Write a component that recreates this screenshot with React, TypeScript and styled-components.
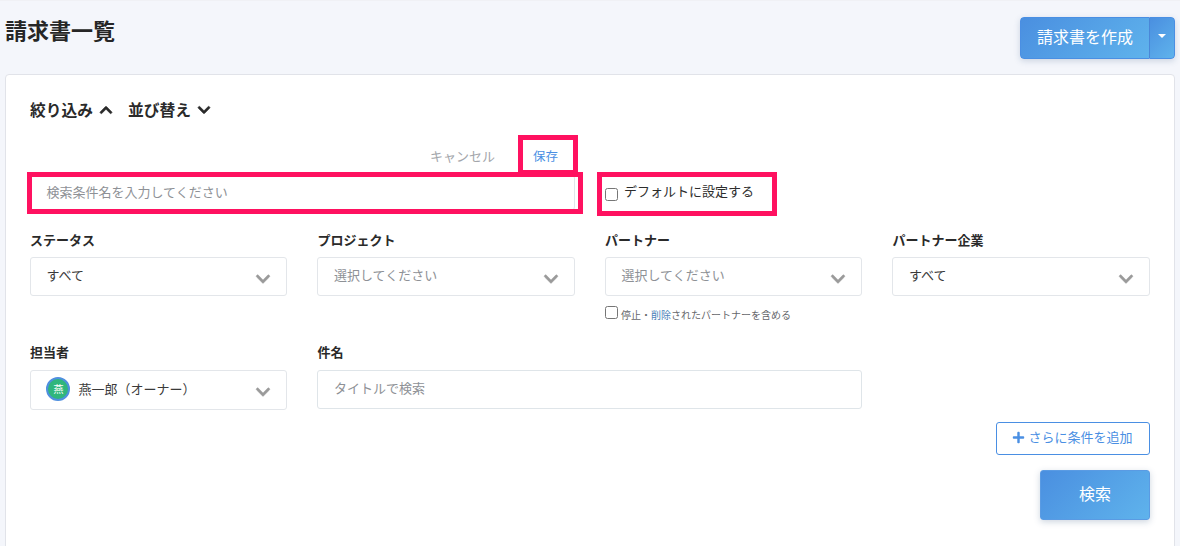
import React from 'react';
import styled, { createGlobalStyle } from 'styled-components';
import { FaChevronDown, FaChevronUp, FaPlus } from 'react-icons/fa';

const Global = createGlobalStyle`
  html, body { margin: 0; padding: 0; height: 546px; overflow: hidden; background: #f4f6fb; }
  body { font-family: "Noto Sans CJK JP", "Noto Sans", sans-serif; color: #222; }
  * { box-sizing: border-box; }
`;

const Page = styled.div`
  height: 546px;
  overflow: hidden;
  padding: 0 5px;
  border-top: 1px solid #f0f1f5;
`;

const Header = styled.header`
  display: flex;
  justify-content: space-between;
  align-items: flex-start;
  height: 73px;
`;

const Title = styled.h1`
  margin: 14px 0 0;
  font-size: 22px;
  line-height: 28px;
  font-weight: 700;
  color: #262626;
`;

const SplitButton = styled.div`
  display: flex;
  margin-top: 16px;
  height: 42px;
  border-radius: 4px;
  box-shadow: 0 2px 6px rgba(60, 90, 130, 0.22);
  overflow: hidden;
`;

const gradient = 'linear-gradient(135deg, #4a8fe0 0%, #5fb3ec 100%)';

const CreateButton = styled.button`
  width: 130px;
  border: 1px solid #4a8fe3;
  border-right: 1px solid #4a87d8;
  border-radius: 4px 0 0 4px;
  background: ${gradient};
  color: #fff;
  font: 400 16px/1 "Noto Sans CJK JP", sans-serif;
  padding: 0 0 5px;
`;

const CaretButton = styled.button`
  width: 25px;
  border: 1px solid #4a8fe3;
  border-left: none;
  border-radius: 0 4px 4px 0;
  background: ${gradient};
  display: flex;
  align-items: center;
  justify-content: center;
  padding: 0 0 4px;
  &::before {
    content: "";
    border-left: 4px solid transparent;
    border-right: 4px solid transparent;
    border-top: 4px solid #fff;
  }
`;

const Panel = styled.main`
  height: 480px;
  background: #fff;
  border: 1px solid #e1e3e9;
  border-radius: 4px;
  padding: 24px 24.1px 0 23.9px;
`;

const Toggles = styled.div`
  display: flex;
  gap: 15px;
  height: 24px;
  align-items: center;
`;

const Toggle = styled.button`
  display: flex;
  align-items: center;
  gap: 6px;
  border: none;
  background: none;
  padding: 0 0 2px;
  font: 700 15.75px/22px "Noto Sans CJK JP", sans-serif;
  color: #2a2a2a;
  svg {
    width: 14px;
    height: 14px;
    stroke: currentColor;
    stroke-width: 24;
  }
`;

const SaveRow = styled.div`
  display: flex;
  height: 38px;
  margin-top: 13px;
  padding-left: 400px;
  align-items: flex-start;
`;

const CancelLink = styled.span`
  font-size: 13px;
  line-height: 40px;
  color: #a3a6ab;
  width: 66px;
  white-space: nowrap;
`;

/* The pink frames are annotations drawn over the UI */
const Framed = styled.div<{ $t: number; $r: number; $b: number; $l: number }>`
  position: relative;
  &::after {
    content: "";
    position: absolute;
    top: ${p => p.$t}px;
    right: ${p => p.$r}px;
    bottom: ${p => p.$b}px;
    left: ${p => p.$l}px;
    border: 5px solid #ff1160;
    pointer-events: none;
  }
`;

const SaveLink = styled(Framed)`
  margin-left: 37px;
  font-size: 12.5px;
  line-height: 40px;
  color: #4a8fe3;
`;

const Grid = styled.div`
  display: grid;
  grid-template-columns: repeat(4, 1fr);
  column-gap: 30px;
`;

const NameRow = styled(Grid)`
  height: 58px;
`;

const NameField = styled(Framed)`
  grid-column: span 2;
  height: 37px;
`;

const NameInput = styled.div`
  height: 37px;
  border: 1px solid #e1e5ea;
  border-radius: 4px;
  padding: 0 15.6px;
  font-size: 13px;
  line-height: 33px;
  color: #8e9196;
`;

const DefaultField = styled(Framed)`
  display: flex;
  align-items: flex-start;
  width: 172px;
  font-size: 13px;
  line-height: 34px;
  color: #2d2d2d;
  white-space: nowrap;
`;

const Check = styled.span<{ $top: number }>`
  flex: none;
  width: 13px;
  height: 13px;
  margin-top: ${p => p.$top}px;
  border: 1px solid #767676;
  border-radius: 2.5px;
  background: #fff;
`;

const DefaultLabel = styled.span`
  margin-left: 6px;
`;

const FieldsGrid = styled(Grid)`
  grid-template-rows: 112px auto;
`;

const Field = styled.div<{ $span?: number }>`
  grid-column: span ${p => p.$span ?? 1};
`;

const Label = styled.div<{ $low?: boolean }>`
  font-size: 13px;
  font-weight: 700;
  line-height: 16px;
  height: ${p => (p.$low ? 26 : 25)}px;
  color: #2a2a2a;
`;

const Select = styled.div<{ $muted?: boolean; $tall?: boolean }>`
  display: flex;
  align-items: center;
  justify-content: space-between;
  height: ${p => (p.$tall ? 40 : 39)}px;
  padding: 0 15px ${p => (p.$tall ? 3 : 4)}px 15.6px;
  border: 1px solid #e3e6ea;
  border-radius: 3px;
  font-size: 13px;
  color: ${p => (p.$muted ? '#8e9196' : '#3a3a3a')};
  svg {
    font-size: 16px;
    color: #9a9a9a;
    margin-top: ${p => (p.$tall ? 7 : 8)}px;
    flex: none;
    stroke: currentColor;
    stroke-width: 16;
  }
`;

const Owner = styled.span`
  display: flex;
  align-items: center;
  gap: 8px;
`;

const Avatar = styled.span`
  width: 24px;
  height: 24px;
  border-radius: 50%;
  background: #2fb67c;
  border: 2px solid #4f8fdf;
  color: #fff;
  font-size: 10px;
  display: flex;
  align-items: center;
  justify-content: center;
`;

const TextInput = styled.div`
  height: 39px;
  border: 1px solid #dfe5e9;
  border-radius: 3px;
  padding: 0 15.6px;
  font-size: 13px;
  line-height: 33px;
  color: #8e9196;
`;

const Note = styled.div`
  display: flex;
  align-items: flex-start;
  margin-top: 9px;
  font-size: 10px;
  line-height: 20px;
  color: #66676b;
  white-space: nowrap;
`;

const NoteText = styled.span`
  margin-left: 3px;
`;

const NoteLink = styled.span`
  color: #4a7fb8;
`;

const Actions = styled.div`
  display: flex;
  flex-direction: column;
  align-items: flex-end;
  margin-top: 12px;
  gap: 15px;
`;

const AddButton = styled.button`
  display: flex;
  align-items: center;
  justify-content: center;
  gap: 3px;
  width: 154px;
  height: 33px;
  background: #fff;
  border: 1px solid #4a8fe3;
  border-radius: 3px;
  color: #4a8fe3;
  font: 400 13px/1 "Noto Sans CJK JP", sans-serif;
  padding: 0 1px 4px 0;
  svg { font-size: 13px; margin-top: 2px; }
`;

const SearchButton = styled.button`
  width: 110px;
  height: 50px;
  border: 1px solid #5a9be3;
  border-radius: 3px;
  background: ${gradient};
  color: #fff;
  font: 400 16px/1 "Noto Sans CJK JP", sans-serif;
  padding: 0 0 4px;
  box-shadow: 0 2px 6px rgba(60, 90, 130, 0.25);
`;

export default function App() {
  return (
    <Page>
      <Global />
      <Header>
        <Title>請求書一覧</Title>
        <SplitButton>
          <CreateButton>請求書を作成</CreateButton>
          <CaretButton aria-label="menu" />
        </SplitButton>
      </Header>
      <Panel>
        <Toggles>
          <Toggle>絞り込み <FaChevronUp /></Toggle>
          <Toggle>並び替え <FaChevronDown /></Toggle>
        </Toggles>
        <SaveRow>
          <CancelLink>キャンセル</CancelLink>
          <SaveLink $t={-1} $r={-20} $b={1} $l={-15}>保存</SaveLink>
        </SaveRow>
        <NameRow>
          <NameField $t={-2} $r={-8} $b={-3} $l={-3}>
            <NameInput>検索条件名を入力してください</NameInput>
          </NameField>
          <DefaultField $t={-2} $r={0} $b={16} $l={-8}>
            <Check $top={14} />
            <DefaultLabel>デフォルトに設定する</DefaultLabel>
          </DefaultField>
        </NameRow>
        <FieldsGrid>
          <Field>
            <Label>ステータス</Label>
            <Select>すべて<FaChevronDown /></Select>
          </Field>
          <Field>
            <Label>プロジェクト</Label>
            <Select $muted>選択してください<FaChevronDown /></Select>
          </Field>
          <Field>
            <Label>パートナー</Label>
            <Select $muted>選択してください<FaChevronDown /></Select>
            <Note>
              <Check $top={1} />
              <NoteText>停止・<NoteLink>削除</NoteLink>されたパートナーを含める</NoteText>
            </Note>
          </Field>
          <Field>
            <Label>パートナー企業</Label>
            <Select>すべて<FaChevronDown /></Select>
          </Field>
          <Field>
            <Label $low>担当者</Label>
            <Select $tall>
              <Owner><Avatar>燕</Avatar>燕一郎（オーナー）</Owner>
              <FaChevronDown />
            </Select>
          </Field>
          <Field $span={2}>
            <Label $low>件名</Label>
            <TextInput>タイトルで検索</TextInput>
          </Field>
        </FieldsGrid>
        <Actions>
          <AddButton><FaPlus />さらに条件を追加</AddButton>
          <SearchButton>検索</SearchButton>
        </Actions>
      </Panel>
    </Page>
  );
}
